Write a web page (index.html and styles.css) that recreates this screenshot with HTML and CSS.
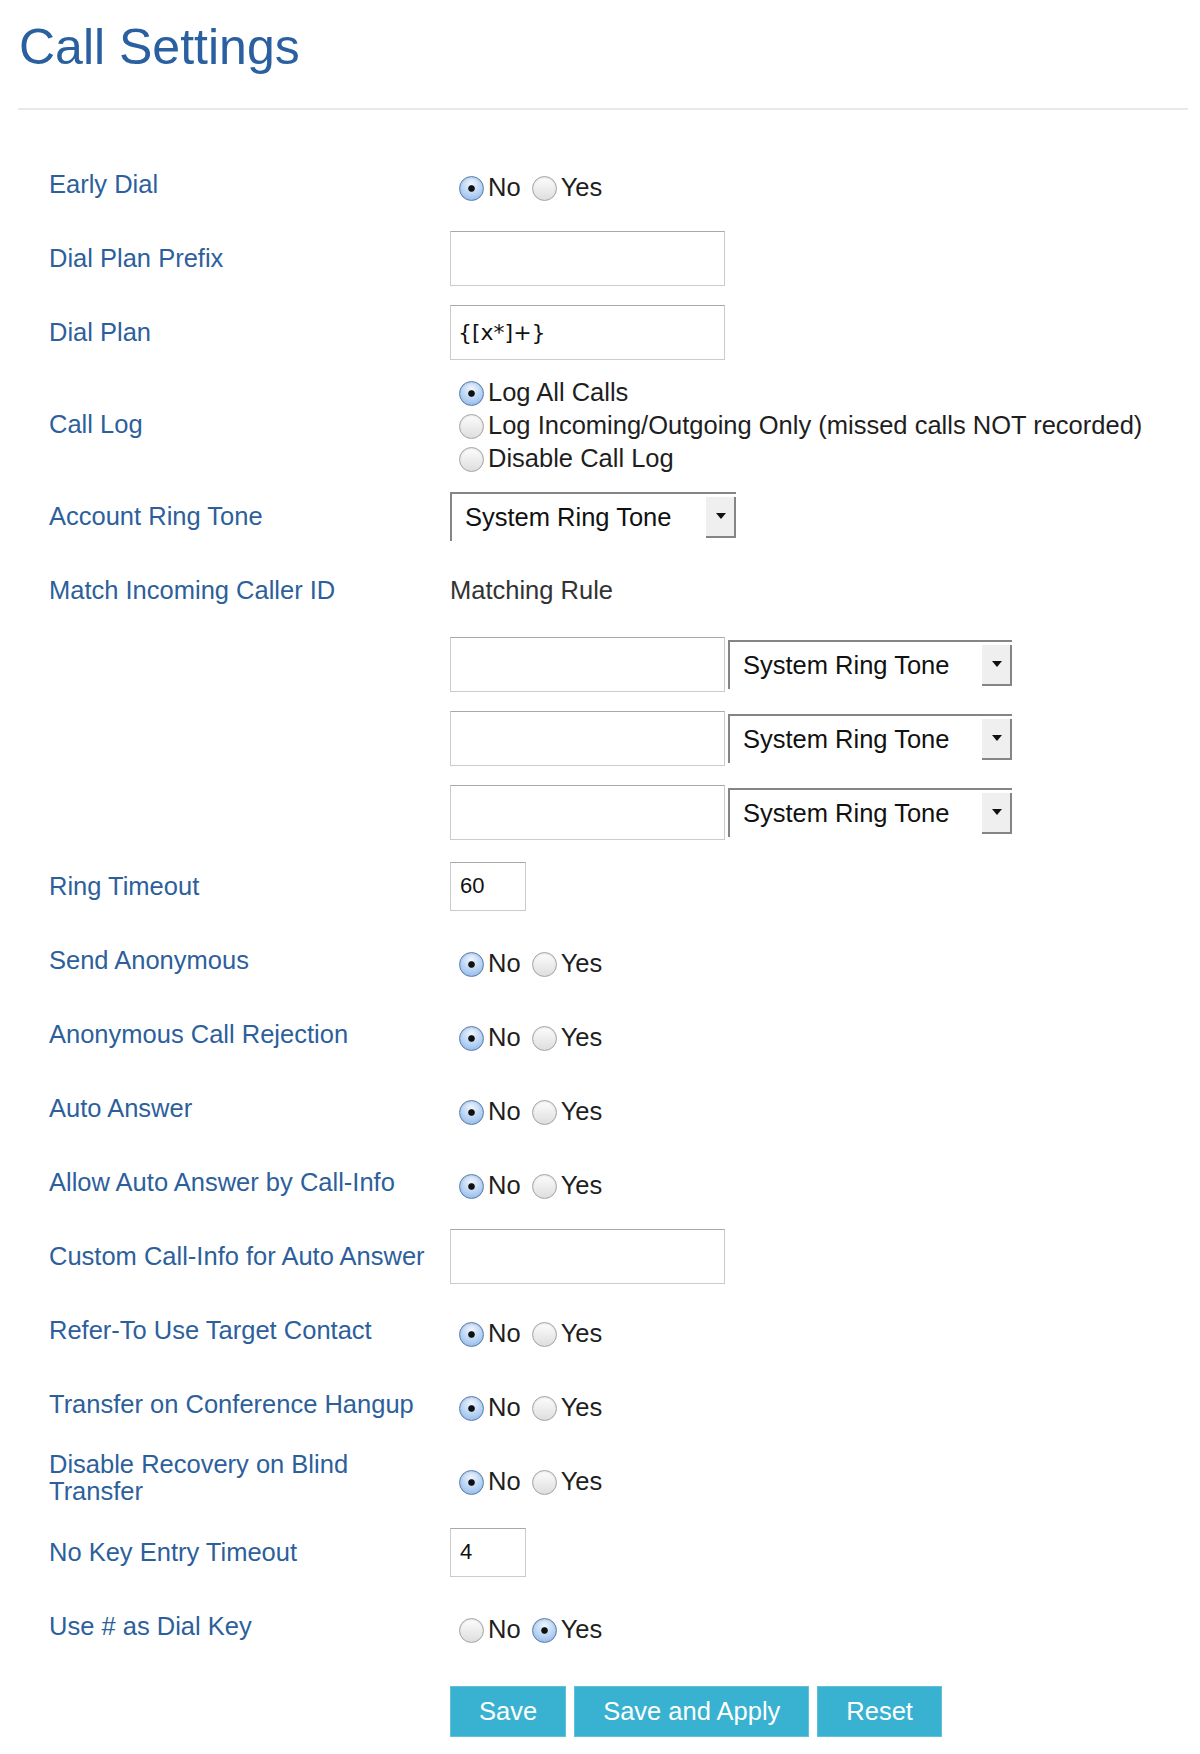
FILE: index.html
```html
<!DOCTYPE html>
<html lang="en">
<head>
    <meta charset="UTF-8">
    <meta name="viewport" content="width=device-width, initial-scale=1.0">
    <title>Call Settings</title>
    <link rel="stylesheet" href="styles.css">
</head>
<body>
<div class="page">
    <h1>Call Settings</h1>
    <hr>

    <form class="settings">
        <div class="row">
            <div class="label">Early Dial</div>
            <div class="choices">
                <label><input type="radio" name="early_dial" checked>No</label>
                <label><input type="radio" name="early_dial">Yes</label>
            </div>
        </div>

        <div class="row">
            <div class="label">Dial Plan Prefix</div>
            <div><input type="text" class="text" name="dial_plan_prefix"></div>
        </div>

        <div class="row">
            <div class="label">Dial Plan</div>
            <div><input type="text" class="text" name="dial_plan" value="{[x*]+}"></div>
        </div>

        <div class="row">
            <div class="label">Call Log</div>
            <div class="choices stack">
                <label><input type="radio" name="call_log" checked>Log All Calls</label>
                <label><input type="radio" name="call_log">Log Incoming/Outgoing Only (missed calls NOT recorded)</label>
                <label><input type="radio" name="call_log">Disable Call Log</label>
            </div>
        </div>

        <div class="row">
            <div class="label">Account Ring Tone</div>
            <div class="select">
                <select name="ring_tone">
                    <option>System Ring Tone</option>
                </select>
            </div>
        </div>

        <div class="row">
            <div class="label">Match Incoming Caller ID</div>
            <div class="plain">Matching Rule</div>
        </div>

        <div class="row">
            <div class="label"></div>
            <div class="match">
                <input type="text" class="text" name="match_rule_1">
                <div class="select narrow"><select name="match_tone_1"><option>System Ring Tone</option></select></div>
            </div>
        </div>
        <div class="row">
            <div class="label"></div>
            <div class="match">
                <input type="text" class="text" name="match_rule_2">
                <div class="select narrow"><select name="match_tone_2"><option>System Ring Tone</option></select></div>
            </div>
        </div>
        <div class="row">
            <div class="label"></div>
            <div class="match">
                <input type="text" class="text" name="match_rule_3">
                <div class="select narrow"><select name="match_tone_3"><option>System Ring Tone</option></select></div>
            </div>
        </div>

        <div class="row">
            <div class="label">Ring Timeout</div>
            <div><input type="text" class="text short" name="ring_timeout" value="60"></div>
        </div>

        <div class="row">
            <div class="label">Send Anonymous</div>
            <div class="choices">
                <label><input type="radio" name="send_anon" checked>No</label>
                <label><input type="radio" name="send_anon">Yes</label>
            </div>
        </div>

        <div class="row">
            <div class="label">Anonymous Call Rejection</div>
            <div class="choices">
                <label><input type="radio" name="anon_reject" checked>No</label>
                <label><input type="radio" name="anon_reject">Yes</label>
            </div>
        </div>

        <div class="row">
            <div class="label">Auto Answer</div>
            <div class="choices">
                <label><input type="radio" name="auto_answer" checked>No</label>
                <label><input type="radio" name="auto_answer">Yes</label>
            </div>
        </div>

        <div class="row">
            <div class="label">Allow Auto Answer by Call-Info</div>
            <div class="choices">
                <label><input type="radio" name="auto_answer_info" checked>No</label>
                <label><input type="radio" name="auto_answer_info">Yes</label>
            </div>
        </div>

        <div class="row">
            <div class="label">Custom Call-Info for Auto Answer</div>
            <div><input type="text" class="text" name="custom_call_info"></div>
        </div>

        <div class="row">
            <div class="label">Refer-To Use Target Contact</div>
            <div class="choices">
                <label><input type="radio" name="refer_to" checked>No</label>
                <label><input type="radio" name="refer_to">Yes</label>
            </div>
        </div>

        <div class="row">
            <div class="label">Transfer on Conference Hangup</div>
            <div class="choices">
                <label><input type="radio" name="conf_transfer" checked>No</label>
                <label><input type="radio" name="conf_transfer">Yes</label>
            </div>
        </div>

        <div class="row">
            <div class="label">Disable Recovery on Blind Transfer</div>
            <div class="choices">
                <label><input type="radio" name="blind_recovery" checked>No</label>
                <label><input type="radio" name="blind_recovery">Yes</label>
            </div>
        </div>

        <div class="row">
            <div class="label">No Key Entry Timeout</div>
            <div><input type="text" class="text short" name="no_key_timeout" value="4"></div>
        </div>

        <div class="row">
            <div class="label">Use # as Dial Key</div>
            <div class="choices">
                <label><input type="radio" name="hash_dial">No</label>
                <label><input type="radio" name="hash_dial" checked>Yes</label>
            </div>
        </div>

        <div class="actions">
            <button type="button" class="btn">Save</button>
            <button type="button" class="btn">Save and Apply</button>
            <button type="reset" class="btn">Reset</button>
        </div>
    </form>
</div>
</body>
</html>
```

FILE: styles.css
```css
* {
    box-sizing: border-box;
}

body {
    margin: 0;
    font-family: "Liberation Sans", Arial, sans-serif;
    background: #fff;
    color: #1e1e1e;
}

.page {
    padding: 0 12px 18px 17px;
}

h1 {
    margin: 0;
    padding: 17px 0 0 2px;
    font-size: 50px;
    line-height: 60px;
    font-weight: normal;
    color: #2a60a0;
}

hr {
    border: 0;
    height: 2px;
    background: #e8e8e8;
    margin: 31px 0 0 1px;
}

.settings {
    margin-top: 37px;
    padding-left: 30px;
}

.row {
    display: grid;
    grid-template-columns: 403px 1fr;
    align-items: center;
    min-height: 74px;
    padding: 4px 0;
}

.label {
    font-size: 25.5px;
    line-height: 27px;
    color: #2d5f9c;
    padding: 0 18px 0 2px;
}

.plain {
    font-size: 25.5px;
    color: #333;
}

/* radio groups */
.choices {
    font-size: 25.5px;
    line-height: 29px;
    padding: 6px 0 0 5px;
}
.choices label {
    white-space: nowrap;
}
.choices.stack {
    padding: 3px 0 0 5px;
}
.choices.stack label {
    display: block;
    line-height: 33px;
}

input[type="radio"] {
    -webkit-appearance: none;
    appearance: none;
    width: 25px;
    height: 25px;
    margin: 0 4px 0 4px;
    border-radius: 50%;
    border: 1px solid #a4a4a4;
    background: linear-gradient(#fdfdfd, #dedede);
    box-shadow: inset 0 1px 2px rgba(0, 0, 0, 0.1);
    vertical-align: -5px;
}
input[type="radio"]:checked {
    border-color: #587cae;
    background:
        radial-gradient(circle, #111 0 2.8px, transparent 3.8px),
        radial-gradient(circle at 50% 30%, #eef5fe, #b1cff2 60%, #86ade0);
}

/* text fields */
.text {
    width: 275px;
    height: 55px;
    border: 1px solid #cbcbcb;
    border-top-color: #a8a8a8;
    padding: 0 7px;
    font: 22px "DejaVu Sans", sans-serif;
    color: #111;
    background: #fff;
    border-radius: 0;
}
.text.short {
    width: 76px;
    height: 49px;
    padding: 0 9px;
    font-family: "Liberation Sans", Arial, sans-serif;
}

/* ring tone dropdowns */
.select {
    position: relative;
    width: 286px;
    height: 49px;
}
.select.narrow {
    width: 284px;
}
.select select {
    -webkit-appearance: none;
    appearance: none;
    width: 100%;
    height: 100%;
    border: 0;
    border-top: 2px solid #858585;
    border-left: 2px solid #858585;
    border-radius: 0;
    background: #fff;
    padding: 0 0 0 13px;
    font: 25.5px "Liberation Sans", Arial, sans-serif;
    color: #111;
}
.select::after {
    content: "";
    position: absolute;
    right: 0;
    top: 5px;
    bottom: 3px;
    width: 28px;
    border-right: 2px solid #858585;
    border-bottom: 2px solid #858585;
    background: #efefef;
    pointer-events: none;
}
.select::before {
    content: "";
    position: absolute;
    right: 10px;
    top: 21px;
    border-left: 5px solid transparent;
    border-right: 5px solid transparent;
    border-top: 6px solid #111;
    z-index: 1;
    pointer-events: none;
}

.match {
    display: flex;
    align-items: center;
    gap: 3px;
}

/* buttons */
.actions {
    display: flex;
    gap: 8px;
    padding: 23px 0 0 403px;
}
.btn {
    height: 51px;
    padding: 0 28px;
    font: 25.5px "Liberation Sans", Arial, sans-serif;
    color: #fff;
    background: #38b2d0;
    border: 1px solid #62c1d9;
    border-radius: 0;
    cursor: pointer;
}
.btn:hover {
    background: #2fa3c0;
}
```
